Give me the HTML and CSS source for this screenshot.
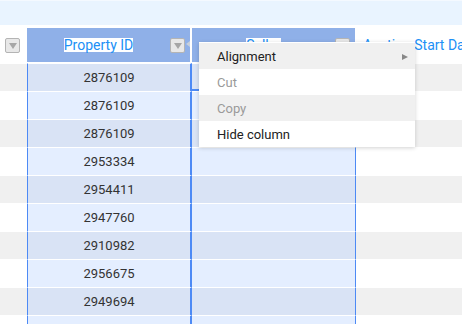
FILE: index.html
```html
<!DOCTYPE html>
<html lang="en">
<head>
  <meta charset="UTF-8">
  <title>Grid</title>
  <link rel="stylesheet" href="styles.css">
</head>
<body>

<div class="toolbar"></div>

<div class="grid">
  <div class="head-row">
    <div class="hcell c0"><span class="filter"></span></div>
    <div class="hcell c1 sel">
      <span class="label">Property ID</span>
      <span class="filter"></span>
      <span class="resize"></span>
    </div>
    <div class="hcell c2 sel">
      <span class="label">Seller</span>
      <span class="filter"></span>
    </div>
    <div class="hcell c3"><span class="label plain">Auction Start Date</span></div>
  </div>

  <div class="row odd"><div class="cell c0"></div><div class="cell c1">2876109</div><div class="cell c2 active"></div><div class="cell c3"></div></div>
  <div class="row"><div class="cell c0"></div><div class="cell c1">2876109</div><div class="cell c2"></div><div class="cell c3"></div></div>
  <div class="row odd"><div class="cell c0"></div><div class="cell c1">2876109</div><div class="cell c2"></div><div class="cell c3"></div></div>
  <div class="row"><div class="cell c0"></div><div class="cell c1">2953334</div><div class="cell c2"></div><div class="cell c3"></div></div>
  <div class="row odd"><div class="cell c0"></div><div class="cell c1">2954411</div><div class="cell c2"></div><div class="cell c3"></div></div>
  <div class="row"><div class="cell c0"></div><div class="cell c1">2947760</div><div class="cell c2"></div><div class="cell c3"></div></div>
  <div class="row odd"><div class="cell c0"></div><div class="cell c1">2910982</div><div class="cell c2"></div><div class="cell c3"></div></div>
  <div class="row"><div class="cell c0"></div><div class="cell c1">2956675</div><div class="cell c2"></div><div class="cell c3"></div></div>
  <div class="row odd"><div class="cell c0"></div><div class="cell c1">2949694</div><div class="cell c2"></div><div class="cell c3"></div></div>
  <div class="row"><div class="cell c0"></div><div class="cell c1"></div><div class="cell c2"></div><div class="cell c3"></div></div>
</div>

<ul class="menu">
  <li class="item hover">Alignment<span class="arrow"></span></li>
  <li class="item disabled">Cut</li>
  <li class="item hover disabled">Copy</li>
  <li class="item">Hide column</li>
</ul>

</body>
</html>
```

FILE: styles.css
```css
html {
  font-family: Roboto, "Liberation Sans", sans-serif;
  font-size: 13px;
}

body {
  margin: 0;
  width: 462px;
  height: 324px;
  overflow: hidden;
  position: relative;
  background: #fff;
}

.toolbar {
  height: 24px;
  background: #e9f4ff;
  border-top: 1px solid #f4f9ff;
}

.grid {
  margin-top: 3px;
  height: 296px;
  overflow: hidden;
}

.head-row {
  display: flex;
  height: 35px;
}

.hcell {
  display: flex;
  align-items: center;
  height: 34px;
  position: relative;
  flex: none;
}

.hcell.c0 {
  width: 27px;
}

.hcell.c1 {
  width: 163px;
}

.hcell.c2 {
  width: 163px;
  margin-left: 2px;
}

.hcell.c3 {
  flex: 1;
  white-space: nowrap;
  overflow: hidden;
}

.hcell.sel {
  background: #8fb0e8;
}

.label {
  flex: 1;
  text-align: center;
  color: #2190f6;
  font-size: 14px;
}

.hcell.sel .label {
  flex: none;
  margin: 0 auto;
  background: #fff;
  line-height: 14px;
}

.label.plain {
  text-align: left;
  padding-left: 8px;
}

.filter {
  width: 13px;
  height: 13px;
  border: 1px solid #b4b4b4;
  background: #e8e8e8;
  border-radius: 2px;
  position: relative;
  flex: none;
  margin-right: 5px;
}

.c0 .filter {
  margin-left: 5px;
}

.filter::after {
  content: "";
  position: absolute;
  left: 3px;
  top: 4px;
  border-left: 4px solid transparent;
  border-right: 4px solid transparent;
  border-top: 6px solid #a6a6a6;
}

.resize {
  position: absolute;
  right: -8px;
  top: 13px;
  width: 12px;
  height: 6px;
}

.resize::before,
.resize::after {
  content: "";
  position: absolute;
  top: 0;
  border-top: 3px solid transparent;
  border-bottom: 3px solid transparent;
}

.resize::before {
  left: 0;
  border-right: 4px solid #c8d0dc;
}

.resize::after {
  right: 0;
  border-left: 4px solid #c8d0dc;
}

.row {
  display: flex;
  height: 28px;
}

.cell {
  height: 27px;
  border-top: 1px solid #fff;
  line-height: 27px;
  text-align: center;
  color: #333;
  font-size: 13px;
  flex: none;
}

.cell.c0 {
  width: 27px;
}

.cell.c1 {
  width: 162px;
  border-left: 1px solid #4d8af5;
  border-right: 2px solid #4d8af5;
  background: #e4eeff;
}

.cell.c2 {
  width: 163px;
  border-right: 1px solid #4d8af5;
  background: #e4eeff;
}

.cell.c3 {
  flex: 1;
}

.row.odd .c0,
.row.odd .c3 {
  background: #f0f0f0;
}

.row.odd .c1,
.row.odd .c2 {
  background: #d9e3f5;
}

.cell.active {
  box-shadow: inset 0 -2px 0 #4d8af5;
}

.menu {
  position: absolute;
  left: 199px;
  top: 42px;
  width: 216px;
  margin: 0;
  padding: 1px 0 0;
  list-style: none;
  background: #fff;
  box-shadow: 0 1px 4px rgba(0, 0, 0, 0.18);
}

.item {
  height: 26px;
  line-height: 28px;
  padding-left: 18px;
  color: #222;
  font-size: 13px;
  position: relative;
}

.item.hover {
  background: #f0f0f0;
}

.item.disabled {
  color: #9a9a9a;
}

.arrow {
  position: absolute;
  right: 7px;
  top: 11px;
  border-top: 3px solid transparent;
  border-bottom: 3px solid transparent;
  border-left: 6px solid #888;
}
```
